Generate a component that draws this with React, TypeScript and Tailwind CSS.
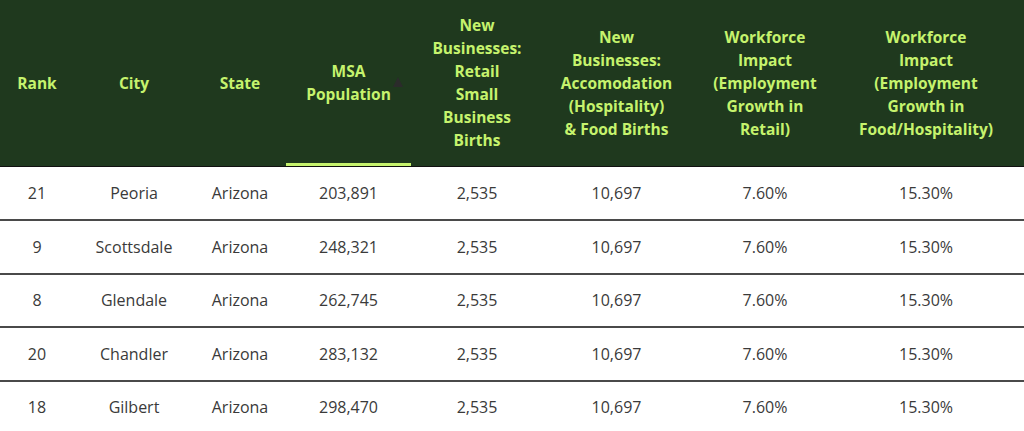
const COLUMNS = [
  { lines: ["Rank"], width: "w-[74px]" },
  { lines: ["City"], width: "w-[120px]" },
  { lines: ["State"], width: "w-[92px]" },
  { lines: ["MSA", "Population"], width: "w-[125px]", sorted: true },
  { lines: ["New", "Businesses:", "Retail", "Small", "Business", "Births"], width: "w-[132px]" },
  { lines: ["New", "Businesses:", "Accomodation", "(Hospitality)", "& Food Births"], width: "w-[147px]" },
  { lines: ["Workforce", "Impact", "(Employment", "Growth in", "Retail)"], width: "w-[150px]" },
  { lines: ["Workforce", "Impact", "(Employment", "Growth in", "Food/Hospitality)"], width: "w-[184px]" },
];

const ROWS = [
  ["21", "Peoria", "Arizona", "203,891", "2,535", "10,697", "7.60%", "15.30%"],
  ["9", "Scottsdale", "Arizona", "248,321", "2,535", "10,697", "7.60%", "15.30%"],
  ["8", "Glendale", "Arizona", "262,745", "2,535", "10,697", "7.60%", "15.30%"],
  ["20", "Chandler", "Arizona", "283,132", "2,535", "10,697", "7.60%", "15.30%"],
  ["18", "Gilbert", "Arizona", "298,470", "2,535", "10,697", "7.60%", "15.30%"],
];

function HeaderCell({ lines, sorted, last }: { lines: string[]; sorted?: boolean; last?: boolean }) {
  return (
    <th
      className={`relative align-middle text-center font-bold text-[15.5px] leading-[23px] text-[#c6f36d] px-1 py-[14px] border-b border-[#111] ${
        last ? "pr-[16px]" : ""
      }`}
    >
      {lines.map((line) => (
        <span key={line} className="block whitespace-nowrap">
          {line}
        </span>
      ))}
      {sorted && (
        <>
          <span className="absolute right-[8px] top-[77px] w-0 h-0 border-x-[5px] border-x-transparent border-b-[10px] border-b-[#2b2b2b]" />
          <span className="absolute left-0 right-0 bottom-0 h-[3px] bg-[#c6f36d]" />
        </>
      )}
    </th>
  );
}

export default function App() {
  return (
    <div className="w-[1024px] h-[431px] overflow-hidden bg-white" style={{ fontFamily: '"Open Sans", "Liberation Sans", sans-serif' }}>
      <table className="w-[1024px] table-fixed border-collapse">
        <colgroup>
          {COLUMNS.map((col) => (
            <col key={col.lines.join(" ")} className={col.width} />
          ))}
        </colgroup>
        <thead className="bg-[#1f391e]">
          <tr className="h-[166px]">
            {COLUMNS.map((col, i) => (
              <HeaderCell key={col.lines.join(" ")} lines={col.lines} sorted={col.sorted} last={i === COLUMNS.length - 1} />
            ))}
          </tr>
        </thead>
        <tbody>
          {ROWS.map((row, r) => (
            <tr key={r} className="h-[53.5px] border-b-2 border-[#4a4a4a]">
              {row.map((cell, i) => (
                <td
                  key={i}
                  className={`text-center align-middle text-[16px] text-[#3a3a3a] px-1 ${
                    i === row.length - 1 ? "pr-[16px]" : ""
                  }`}
                >
                  {cell}
                </td>
              ))}
            </tr>
          ))}
        </tbody>
      </table>
    </div>
  );
}
